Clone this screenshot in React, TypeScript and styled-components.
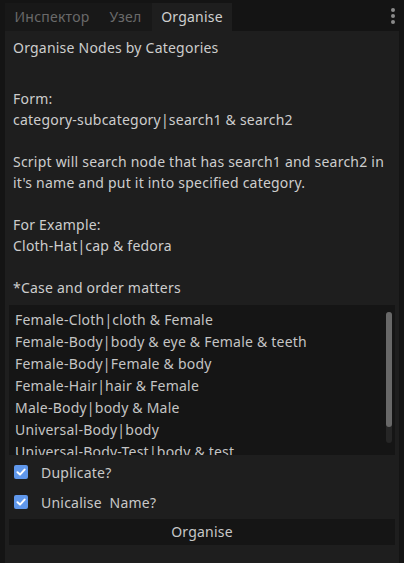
import React from "react";
import styled, { createGlobalStyle } from "styled-components";

const Global = createGlobalStyle`
  html, body { margin: 0; padding: 0; background: #141414; }
  body { width: 404px; height: 563px; overflow: hidden; font-family: "Noto Sans", "Open Sans", sans-serif; font-size: 14px; letter-spacing: 0.22px; }
  * { box-sizing: border-box; }
`;

const Root = styled.div`
  display: flex;
  flex-direction: column;
  width: 404px;
  height: 563px;
  background: #141414;
`;

const TabBar = styled.div`
  display: flex;
  align-items: flex-end;
  height: 31px;
  padding-left: 5px;
`;

const Tab = styled.div<{ $active?: boolean; $w: number }>`
  width: ${(p) => p.$w}px;
  height: 28px;
  display: flex;
  align-items: center;
  justify-content: center;
  padding-bottom: 1px;
  background: ${(p) => (p.$active ? "#1e1e1e" : "#181818")};
  color: ${(p) => (p.$active ? "#cfcfcf" : "#6a6a6a")};
  line-height: 21px;
`;

const Menu = styled.div`
  margin-left: auto;
  align-self: stretch;
  width: 24px;
  display: flex;
  flex-direction: column;
  align-items: center;
  justify-content: flex-start;
  padding-top: 8px;
  padding-left: 1px;
  gap: 2px;
`;

const Dot = styled.span`
  width: 4px;
  height: 4px;
  border-radius: 50%;
  background: #8a8a8a;
`;

const Panel = styled.div`
  flex: 1;
  margin: 0 5px;
  background: #1e1e1e;
  padding: 6px 4px 0 4px;
  display: flex;
  flex-direction: column;
`;

const Label = styled.div<{ $mb?: number }>`
  padding-left: 4px;
  color: #cdcdcd;
  line-height: 21px;
  white-space: pre;
  margin-bottom: ${(p) => p.$mb ?? 0}px;
`;

const TextEdit = styled.div`
  height: 150px;
  background: #151515;
  display: flex;
  overflow: hidden;
`;

const Lines = styled.div`
  flex: 1;
  padding: 4px 0 0 6px;
  color: #c4c4c4;
  line-height: 22px;
  white-space: pre;
  overflow: hidden;
`;

const ScrollTrack = styled.div`
  width: 6px;
  margin: 7px 3px 12px 0;
  border-radius: 3px;
  background: #262626;
  display: flex;
  flex-direction: column;
`;

const Grabber = styled.div`
  height: 115px;
  border-radius: 3px;
  background: #686868;
`;

const CheckRow = styled.div`
  height: 30px;
  display: flex;
  align-items: center;
  padding-left: 5px;
  gap: 13px;
  color: #c8c8c8;
  white-space: pre;
`;

const Box = styled.span`
  width: 14px;
  height: 14px;
  border-radius: 2px;
  background: #6098ec;
  display: flex;
  align-items: center;
  justify-content: center;
`;

const Checks = styled.div`
  margin-top: 2px;
  display: flex;
  flex-direction: column;
`;

const Button = styled.div`
  margin-top: 2px;
  height: 26px;
  background: #151515;
  color: #c8c8c8;
  display: flex;
  align-items: center;
  justify-content: center;
  padding-bottom: 1px;
`;

const Check = () => (
  <svg width="10" height="10" viewBox="0 0 10 10">
    <path d="M1.5 5.3 L4 7.6 L8.6 2.6" stroke="#fff" strokeWidth="2" fill="none" strokeLinecap="round" strokeLinejoin="round" />
  </svg>
);

const lines = [
  "Female-Cloth|cloth & Female",
  "Female-Body|body & eye & Female & teeth",
  "Female-Body|Female & body",
  "Female-Hair|hair & Female",
  "Male-Body|body & Male",
  "Universal-Body|body",
  "Universal-Body-Test|body & test",
];

export default function App() {
  return (
    <Root>
      <Global />
      <TabBar>
        <Tab $w={94}>Инспектор</Tab>
        <Tab $w={53}>Узел</Tab>
        <Tab $w={80} $active>Organise</Tab>
        <Menu>
          <Dot />
          <Dot />
          <Dot />
        </Menu>
      </TabBar>
      <Panel>
        <Label $mb={30}>Organise Nodes by Categories</Label>
        <Label $mb={7}>
          {"Form:\ncategory-subcategory|search1 & search2\n\nScript will search node that has search1 and search2 in\nit's name and put it into specified category.\n\nFor Example:\nCloth-Hat|cap & fedora\n\n*Case and order matters"}
        </Label>
        <TextEdit>
          <Lines>{lines.join("\n")}</Lines>
          <ScrollTrack>
            <Grabber />
          </ScrollTrack>
        </TextEdit>
        <Checks>
          <CheckRow>
            <Box><Check /></Box>
            <span>Duplicate?</span>
          </CheckRow>
          <CheckRow>
            <Box><Check /></Box>
            <span>Unicalise  Name?</span>
          </CheckRow>
        </Checks>
        <Button>Organise</Button>
      </Panel>
    </Root>
  );
}
